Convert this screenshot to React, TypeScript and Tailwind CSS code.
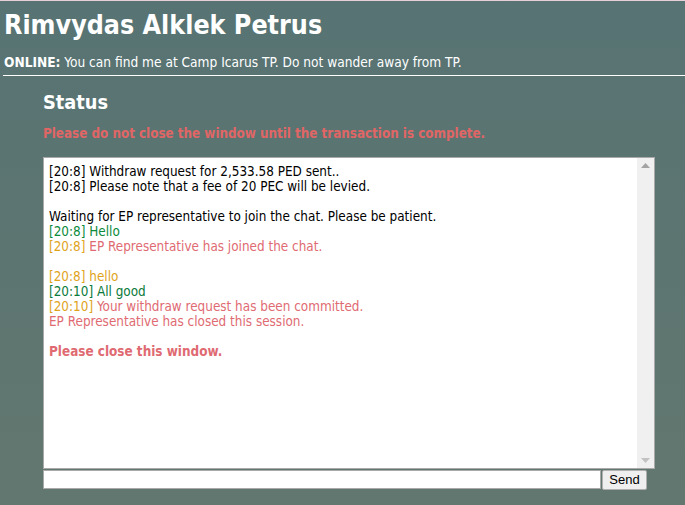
import React from "react";

const font = { fontFamily: '"DejaVu Sans Condensed", "DejaVu Sans", sans-serif' };

export default function App() {
  return (
    <div
      className="w-[685px] h-[505px] overflow-hidden border-t border-[#e6cfd6] bg-gradient-to-b from-[#577373] to-[#62776f] text-white"
      style={font}
    >
      <div className="px-[4px]">
        <h1 className="pt-[7px] text-[26.6px] leading-[34px] font-bold">Rimvydas Alklek Petrus</h1>
        <p className="mt-[12px] text-[13.6px] leading-[16px]">
          <span className="font-bold">ONLINE:</span> You can find me at Camp Icarus TP. Do not wander away from TP.
        </p>
      </div>
      <div className="ml-[3px] mt-[5px] h-px bg-white" />
      <div className="pl-[43px]">
        <h2 className="mt-[15px] text-[19.8px] leading-[24px] font-bold">Status</h2>
        <p className="mt-[11px] text-[13.3px] leading-[16px] font-bold text-[#e06666]">
          Please do not close the window until the transaction is complete.
        </p>
        <div className="mt-[15px] flex w-[612px] h-[312px] border border-[#a9a9a9] bg-white">
          <div className="flex-1 px-[5px] pt-[6px] text-[13.4px] leading-[15px] text-black">
            <div>[20:8] Withdraw request for 2,533.58 PED sent..</div>
            <div>[20:8] Please note that a fee of 20 PEC will be levied.</div>
            <div className="h-[15px]" />
            <div>Waiting for EP representative to join the chat. Please be patient.</div>
            <div className="text-[#0a8a3a]">[20:8] Hello</div>
            <div>
              <span className="text-[#e0a31c]">[20:8]</span>{" "}
              <span className="text-[#e06a72]">EP Representative has joined the chat.</span>
            </div>
            <div className="h-[15px]" />
            <div className="text-[#e0a31c]">[20:8] hello</div>
            <div className="text-[#0a7a3a]">[20:10] All good</div>
            <div>
              <span className="text-[#e0a31c]">[20:10]</span>{" "}
              <span className="text-[#e06a72]">Your withdraw request has been committed.</span>
            </div>
            <div className="text-[#e06a72]">EP Representative has closed this session.</div>
            <div className="h-[15px]" />
            <div className="font-bold text-[#e06a72]">Please close this window.</div>
          </div>
          <div className="w-[17px] bg-[#f0f0f0] flex flex-col items-center justify-between py-[5px]">
            <svg width="9" height="5" viewBox="0 0 9 5"><path d="M4.5 0 L9 5 L0 5 Z" fill="#a3a3a3" /></svg>
            <svg width="9" height="5" viewBox="0 0 9 5"><path d="M0 0 L9 0 L4.5 5 Z" fill="#c2c2c2" /></svg>
          </div>
        </div>
        <div className="mt-[1px] flex items-start">
          <input className="w-[558px] h-[19px] border border-[#a9a9a9] bg-white outline-none" />
          <button
            className="ml-[1px] w-[45px] h-[20px] border border-[#b0b0b0] rounded-[2px] bg-[#efefef] text-black text-[13px] leading-[16px]"
            style={{ fontFamily: '"Liberation Sans", Arial, sans-serif' }}
          >
            Send
          </button>
        </div>
      </div>
    </div>
  );
}
